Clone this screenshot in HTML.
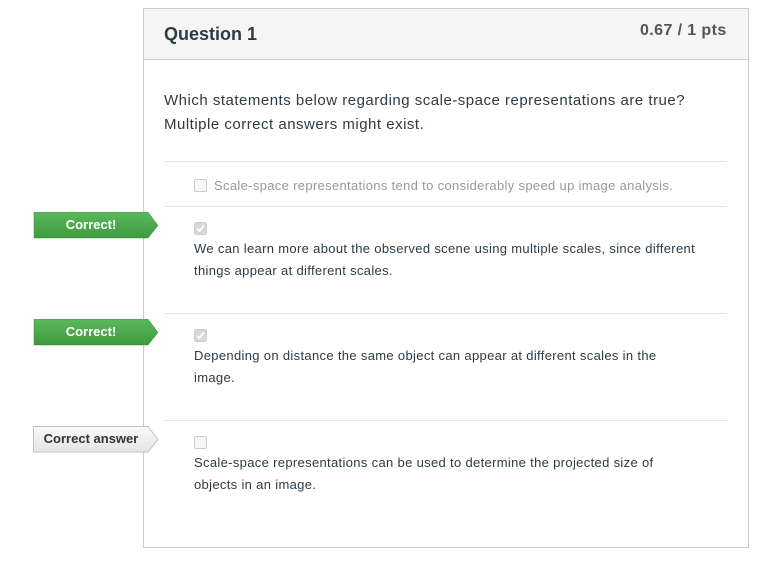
<!DOCTYPE html>
<html><head><style>
body{margin:0;width:769px;height:562px;background:#fff;font-family:"Liberation Sans",sans-serif;color:#2d3b45;position:relative;overflow:hidden}
.a{position:absolute}
.box{left:143px;top:8px;width:604px;height:538px;border:1px solid #c7cdd1}
.hdr{left:144px;top:9px;width:604px;height:50px;background:#f5f5f5;border-bottom:1px solid #c7cdd1}
.sep{left:164px;width:563px;height:1px;background:#e4e6e8}
.cb{width:11px;height:11px;border:1px solid #c7cdd1;border-radius:2px;background:#f7f7f7}
.cbc{background:#d7d7d7;border-color:#ccc}
.t{font-size:13px;line-height:22px;color:#2d3b45;letter-spacing:0.33px}
</style></head><body>
<div class="a box"></div>
<div class="a hdr"></div>
<div class="a" style="left:164px;top:24px;font-size:18px;font-weight:bold;color:#2d3b45">Question 1</div>
<div class="a" style="left:640px;top:22px;font-size:16px;font-weight:bold;color:#555;letter-spacing:0.4px">0.67 / 1 pts</div>
<div class="a" style="left:164px;top:89px;font-size:15px;line-height:24px;color:#2d3b45;letter-spacing:0.5px">Which statements below regarding scale-space representations are true?<br>Multiple correct answers might exist.</div>
<div class="a sep" style="top:161px"></div>
<div class="a cb" style="left:194px;top:179px"></div>
<div class="a t" style="left:214px;top:175px;color:#999">Scale-space representations tend to considerably speed up image analysis.</div>
<div class="a sep" style="top:206px"></div>
<svg class="a" style="left:194px;top:222px" width="13" height="13"><rect x="0.5" y="0.5" width="12" height="12" rx="2" fill="#d7d7d7" stroke="#ccc"/><path d="M3 6.5L5.5 9L10 3.5" fill="none" stroke="#fff" stroke-width="1.8"/></svg>
<div class="a t" style="left:194px;top:238px">We can learn more about the observed scene using multiple scales, since different<br>things appear at different scales.</div>
<div class="a sep" style="top:313px"></div>
<svg class="a" style="left:194px;top:329px" width="13" height="13"><rect x="0.5" y="0.5" width="12" height="12" rx="2" fill="#d7d7d7" stroke="#ccc"/><path d="M3 6.5L5.5 9L10 3.5" fill="none" stroke="#fff" stroke-width="1.8"/></svg>
<div class="a t" style="left:194px;top:345px">Depending on distance the same object can appear at different scales in the<br>image.</div>
<div class="a sep" style="top:420px"></div>
<div class="a cb" style="left:194px;top:436px"></div>
<div class="a t" style="left:194px;top:452px">Scale-space representations can be used to determine the projected size of<br>objects in an image.</div>

<svg class="a" style="left:33px;top:212px" width="126" height="27"><defs><linearGradient id="gg" x1="0" y1="0" x2="0" y2="1"><stop offset="0" stop-color="#5cb85c"/><stop offset="1" stop-color="#3e9a3e"/></linearGradient></defs><path d="M1 0H115L125 13.5L115 26H1Z" fill="url(#gg)" stroke="#3a8a3a" stroke-width="0.5"/><text x="58" y="17" text-anchor="middle" fill="#fff" font-size="13" font-weight="bold" font-family="Liberation Sans">Correct!</text></svg>
<svg class="a" style="left:33px;top:319px" width="126" height="27"><path d="M1 0H115L125 13.5L115 26H1Z" fill="url(#gg)" stroke="#3a8a3a" stroke-width="0.5"/><text x="58" y="17" text-anchor="middle" fill="#fff" font-size="13" font-weight="bold" font-family="Liberation Sans">Correct!</text></svg>
<svg class="a" style="left:33px;top:426px" width="127" height="27"><defs><linearGradient id="wg" x1="0" y1="0" x2="0" y2="1"><stop offset="0" stop-color="#fafafa"/><stop offset="1" stop-color="#e4e4e4"/></linearGradient></defs><path d="M0.5 0.5H115L125 13.5L115 26H0.5Z" fill="url(#wg)" stroke="#c2c2c2"/><text x="58" y="17" text-anchor="middle" fill="#333" font-size="13" font-weight="bold" font-family="Liberation Sans">Correct answer</text></svg>
</body></html>
